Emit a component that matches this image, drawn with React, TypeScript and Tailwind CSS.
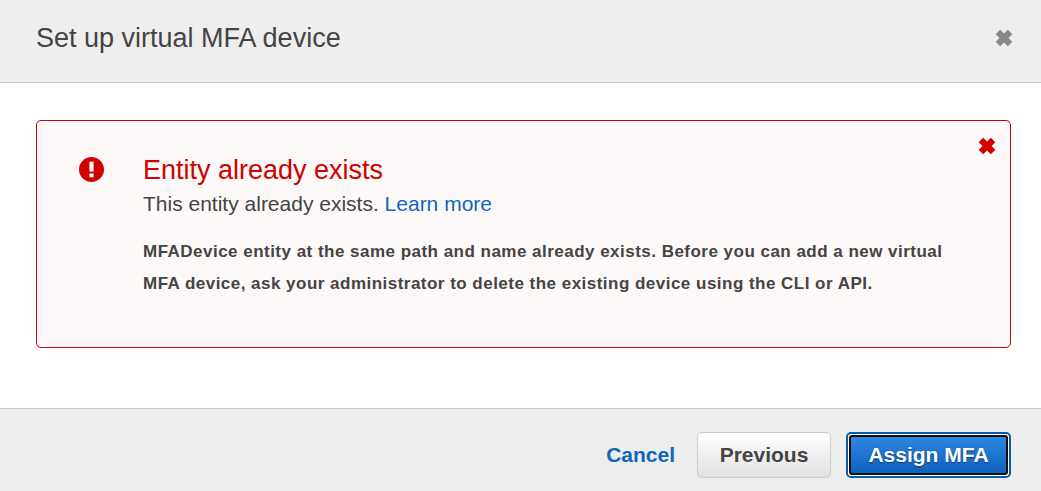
const XIcon = ({ className }: { className: string }) => (
  <svg viewBox="0 0 16 16" className={className} fill="currentColor" aria-hidden>
    <path d="M4.6 0.6 L8 4 L11.4 0.6 L15.4 4.6 L12 8 L15.4 11.4 L11.4 15.4 L8 12 L4.6 15.4 L0.6 11.4 L4 8 L0.6 4.6 Z" />
  </svg>
);

export default function App() {
  return (
    <div className="flex h-[491px] w-[1041px] flex-col bg-white font-['Liberation_Sans',Arial,sans-serif] text-[#444]">
      <div className="flex h-[83px] shrink-0 items-center justify-between border-b border-[#ccc] bg-[#eee] pb-[6px] pl-9 pr-[28px]">
        <h1 className="text-[27px] font-normal leading-none">Set up virtual MFA device</h1>
        <XIcon className="h-[18px] w-[18px] text-[#888]" />
      </div>

      <div className="flex-1 pl-9 pr-[30px] pt-[37px]">
        <div className="relative flex h-[228px] rounded-[5px] border border-[#d00000] bg-[#fdf9f8] pl-[42px] pt-[36px]">
          <svg viewBox="0 0 24 24" className="h-[25px] w-[25px] shrink-0 text-[#d00000]" aria-hidden>
            <circle cx="12" cy="12" r="12" fill="currentColor" />
            <rect x="10" y="4.5" width="4" height="9.5" fill="#fdf9f8" />
            <rect x="10" y="15.8" width="4" height="3.7" fill="#fdf9f8" />
          </svg>
          <div className="ml-[39px] flex-1">
            <h2 className="-mt-px text-[27px] font-normal leading-[28px] text-[#d00000]">Entity already exists</h2>
            <p className="mt-[7px] text-[21px] leading-[26px]">
              This entity already exists. <a className="text-[#1166bb]">Learn more</a>
            </p>
            <p className="mt-[19px] w-[830px] text-[17px] font-bold leading-[32px] tracking-[0.48px]">
              MFADevice entity at the same path and name already exists. Before you can add a new virtual MFA device, ask your administrator to delete the existing device using the CLI or API.
            </p>
          </div>
          <button className="absolute right-[14px] top-[16px] text-[#d00000]">
            <XIcon className="block h-[18px] w-[18px]" />
          </button>
        </div>
      </div>

      <div className="flex h-[83px] shrink-0 items-center justify-end border-t border-[#ccc] bg-[#eee] pr-[30px] pt-[10px]">
        <a className="text-[21px] font-bold text-[#1166bb]">Cancel</a>
        <button className="ml-[22px] h-[46px] w-[134px] rounded-[5px] border border-[#ccc] bg-gradient-to-b from-white to-[#e2e2e2] text-[21px] font-bold text-[#444]">
          Previous
        </button>
        <button className="ml-[15px] h-[46px] w-[165px] rounded-[5px] border-2 border-[#0a5aa8] bg-white p-px">
          <span className="flex h-full w-full items-center justify-center rounded-[3px] border-2 border-[#111] bg-gradient-to-b from-[#2d87e2] to-[#0f62be] text-[21px] font-bold text-white [text-shadow:0_1px_2px_#0a3a70]">
            Assign MFA
          </span>
        </button>
      </div>
    </div>
  );
}
